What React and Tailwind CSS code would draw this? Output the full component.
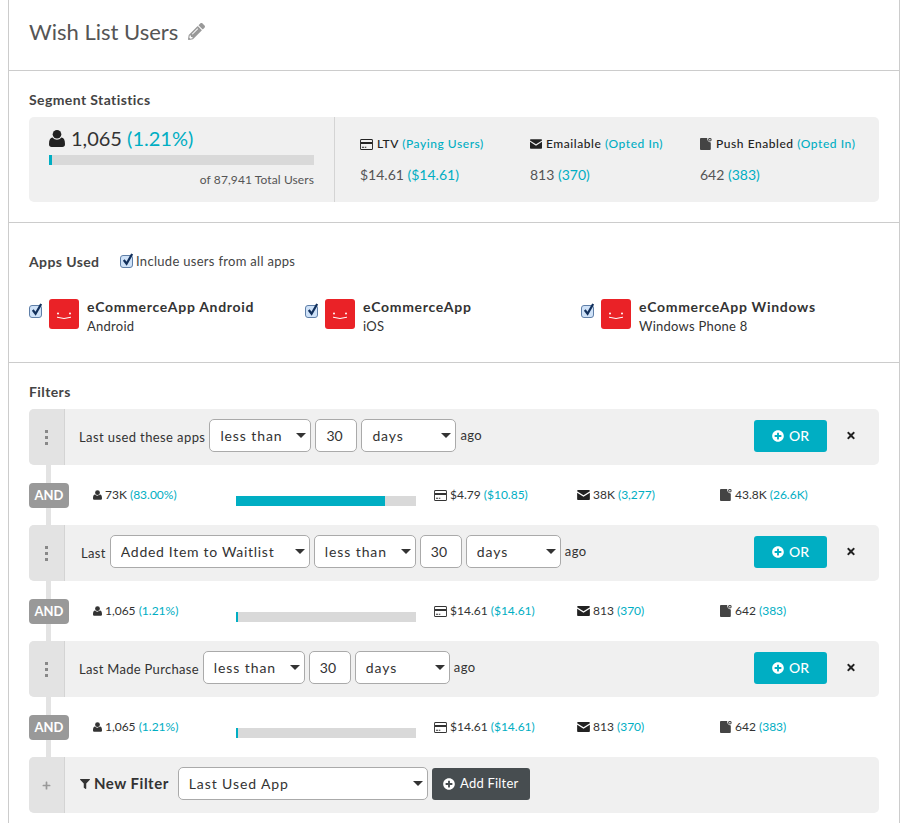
import React from 'react';
import { FaPencilAlt, FaPlusCircle, FaTimes, FaFilter, FaPlus } from 'react-icons/fa';

const UserIcon = ({ className }) => (
  <svg viewBox="0 0 16 17" className={className} fill="currentColor">
    <circle cx="8" cy="4.300" r="4.300" />
    <path d="M3.600 7.600C5 9.200 6.400 9.700 8 9.700s3-.5 4.400-2.100C14.800 7.900 16 10 16 14.200c0 1.800-1 2.800-2.700 2.800H2.700C1 17 0 16 0 14.200 0 10 1.200 7.900 3.600 7.600z" />
  </svg>
);

const CardIcon = ({ className }) => (
  <svg viewBox="0 0 14 12" className={className} fill="currentColor">
    <path d="M1.500 0h11A1.500 1.500 0 0 1 14 1.500v9a1.500 1.500 0 0 1-1.500 1.500h-11A1.500 1.500 0 0 1 0 10.500v-9A1.500 1.500 0 0 1 1.500 0zM1 3.200h12V1.500a.5.5 0 0 0-.5-.5h-11a.5.5 0 0 0-.5.500zM1 5.500v5a.5.5 0 0 0 .5.5h11a.5.5 0 0 0 .5-.5v-5zM2 8.500h2.500v1H2zm3.300 0h1.500v1H5.300z" fillRule="evenodd" />
  </svg>
);

const MailIcon = ({ className }) => (
  <svg viewBox="0 0 14 11" className={className} fill="#222">
    <path d="M1.200 0h11.600C13.500 0 14 .5 14 1.200v.3L7 5.800 0 1.500v-.3C0 .5.500 0 1.200 0z" />
    <path d="M0 3l7 4.400L14 3v6.800c0 .7-.5 1.200-1.200 1.200H1.200C.5 11 0 10.500 0 9.800z" />
  </svg>
);

const PushIcon = ({ className }) => (
  <svg viewBox="0 0 13 13" className={className}>
    <path d="M1 0h6.800c-.3 2.600 1.300 4.600 3.900 4.800V12a1 1 0 0 1-1 1H1a1 1 0 0 1-1-1V1a1 1 0 0 1 1-1z" fill="#444" />
    <circle cx="10.700" cy="1.900" r="1.400" fill="none" stroke="#444" strokeWidth="1.100" />
  </svg>
);

const Check = ({ className = '' }) => (
  <span className={`relative inline-block w-[13px] h-[13px] shrink-0 rounded-[3px] border border-[#5f7fa8] bg-[#cfe2f8] ${className}`}>
    <svg viewBox="0 0 14 16" className="absolute left-[0px] top-[-4px] w-[13px] h-[15px]">
      <path d="M3 8.500l3 4L12 2" fill="none" stroke="#12305c" strokeWidth="2.400" />
    </svg>
  </span>
);

const AppLogo = () => (
  <div className="w-[30px] h-[30px] shrink-0 rounded-[3px] bg-[#ea2227]">
    <svg viewBox="0 0 30 30" className="w-[30px] h-[30px]">
      <circle cx="9" cy="14.500" r="1" fill="#fff" />
      <circle cx="21" cy="14.500" r="1" fill="#fff" />
      <path d="M8 18.200q7 2.600 14 0" fill="none" stroke="#fff" strokeWidth="1" />
    </svg>
  </div>
);

const Select = ({ value, className, tracking = 'tracking-[0.9px]' }) => (
  <div className={`relative h-[33px] shrink-0 ${className}`}>
    <select
      defaultValue={value}
      className={`w-full h-full appearance-none bg-white border border-[#aaa] rounded-[5px] pl-[10px] text-[14px] text-[#333] ${tracking}`}
    >
      <option>{value}</option>
    </select>
    <svg viewBox="0 0 10 5" className="absolute right-[5px] top-[14px] w-[10px] h-[5px] pointer-events-none">
      <path d="M0 0h10L5 5z" fill="#333" />
    </svg>
  </div>
);

const NumberBox = () => (
  <input
    defaultValue="30"
    className="w-[42px] h-[33px] shrink-0 bg-white border border-[#aaa] rounded-[5px] pl-[10px] text-[14px] text-[#333]"
  />
);

const FilterRow = ({ children }) => (
  <div className="flex h-[56px] rounded-[5px] bg-[#f0f0f0] overflow-hidden">
    <div className="w-[36px] shrink-0 flex flex-col items-center justify-center gap-[3px] bg-[#e3e3e3] border-r border-[#d4d4d4]">
      <span className="w-[3px] h-[3px] bg-[#888]" />
      <span className="w-[3px] h-[3px] bg-[#888]" />
      <span className="w-[3px] h-[3px] bg-[#888]" />
    </div>
    <div className="flex-1 flex items-center gap-[4px] pb-[3px] text-[13px] text-[#333]">
      {children}
      <button className="ml-auto w-[73px] h-[32px] flex items-center justify-center gap-[5px] rounded-[3px] bg-[#00aec3] text-white text-[14px] font-medium">
        <FaPlusCircle className="w-[12px] h-[12px]" />
        OR
      </button>
      <FaTimes className="ml-[15px] mr-[23px] w-[10px] h-[11px] text-[#222]" />
    </div>
  </div>
);

const Teal = ({ children }) => <span className="text-[#00aec3]">{children}</span>;

const StatRow = ({ users, pct, fill, ltv, ltvPaid, mail, mailOpt, push, pushOpt }) => (
  <div className="relative flex items-center h-[60px] text-[12px] text-[#333]">
    <div className="absolute left-[17px] top-0 w-[5px] h-full bg-[#e3e3e3]" />
    <div className="relative w-[40px] h-[25px] pt-[1px] flex items-center justify-center rounded-[4px] bg-[#999] text-white text-[13px] font-bold">
      AND
    </div>
    <div className="w-[167px] pl-[24px] shrink-0 flex items-center gap-[3px]">
      <UserIcon className="w-[9px] h-[10px]" />
      <span>{users} <Teal>{pct}</Teal></span>
    </div>
    <div className="w-[180px] h-[10px] mt-[12px] shrink-0 bg-[#d9d9d9]">
      <div className={`h-full bg-[#00aec3] ${fill}`} />
    </div>
    <div className="w-[143px] ml-[18px] shrink-0 flex items-center gap-[3px]">
      <CardIcon className="w-[13px] h-[11px]" />
      <span>{ltv} <Teal>{ltvPaid}</Teal></span>
    </div>
    <div className="w-[143px] shrink-0 flex items-center gap-[3px]">
      <MailIcon className="w-[13px] h-[10px]" />
      <span>{mail} <Teal>{mailOpt}</Teal></span>
    </div>
    <div className="flex items-center gap-[3px]">
      <PushIcon className="w-[12px] h-[12px]" />
      <span>{push} <Teal>{pushOpt}</Teal></span>
    </div>
  </div>
);

const Metric = ({ icon, label, note, value, paid }) => (
  <div className="w-[170px] shrink-0">
    <div className="flex items-center gap-[4px] text-[12px] font-medium tracking-[0.55px] text-[#222] leading-[18px]">
      {icon}
      <span>{label} <Teal>{note}</Teal></span>
    </div>
    <div className="mt-[11px] text-[14px] text-[#555]">
      {value} <Teal>{paid}</Teal>
    </div>
  </div>
);

const AppItem = ({ name, platform }) => (
  <div className="w-[276px] flex items-start">
    <Check className="mt-[6px]" />
    <div className="ml-[7px]"><AppLogo /></div>
    <div className="ml-[8px] -mt-[1px]">
      <div className="text-[14px] font-bold tracking-[0.7px] text-[#333] leading-[18px]">{name}</div>
      <div className="text-[13px] tracking-[0.25px] text-[#333] leading-[20px]">{platform}</div>
    </div>
  </div>
);

export default function App() {
  return (
    <div className="h-[823px] overflow-hidden ml-[8px] mr-[9px] border-x border-[#ccc] bg-white font-['Lato',sans-serif]">
      {/* Title */}
      <div className="h-[71px] px-[20px] pb-[8px] flex items-center gap-[10px] border-b border-[#ccc]">
        <h1 className="text-[22px] text-[#555] font-normal">Wish List Users</h1>
        <FaPencilAlt className="w-[17px] h-[17px] text-[#999]" />
      </div>

      {/* Segment Statistics */}
      <div className="h-[152px] px-[20px] pt-[19px] border-b border-[#ccc]">
        <h2 className="text-[14px] font-bold tracking-[0.4px] text-[#444] leading-[20px]">Segment Statistics</h2>
        <div className="mt-[7px] h-[85px] flex rounded-[5px] bg-[#f0f0f0]">
          <div className="w-[306px] shrink-0 px-[20px] border-r border-[#d4d4d4]">
            <div className="flex items-center gap-[6px] h-[38px] pt-[4px] text-[20px] text-[#333]">
              <UserIcon className="w-[16px] h-[17px] text-[#222]" />
              <span>1,065 <Teal>(1.21%)</Teal></span>
            </div>
            <div className="h-[10px] bg-[#d9d9d9]">
              <div className="h-full w-[3px] bg-[#00aec3]" />
            </div>
            <div className="mt-[6px] text-right text-[12px] tracking-[0.1px] text-[#555]">of 87,941 Total Users</div>
          </div>
          <div className="flex pl-[25px] pt-[18px]">
            <Metric icon={<CardIcon className="w-[13px] h-[11px]" />} label="LTV" note="(Paying Users)" value="$14.61" paid="($14.61)" />
            <Metric icon={<MailIcon className="w-[12px] h-[10px]" />} label="Emailable" note="(Opted In)" value="813" paid="(370)" />
            <Metric icon={<PushIcon className="w-[12px] h-[12px]" />} label="Push Enabled" note="(Opted In)" value="642" paid="(383)" />
          </div>
        </div>
      </div>

      {/* Apps Used */}
      <div className="h-[140px] px-[20px] pt-[28px] border-b border-[#ccc]">
        <div className="flex items-center h-[20px]">
          <h2 className="w-[91px] text-[14px] font-bold tracking-[0.4px] text-[#444]">Apps Used</h2>
          <Check />
          <span className="ml-[3px] pt-[1px] text-[13px] tracking-[0.3px] text-[#444]">Include users from all apps</span>
        </div>
        <div className="mt-[28px] flex">
          <AppItem name="eCommerceApp Android" platform="Android" />
          <AppItem name="eCommerceApp" platform="iOS" />
          <AppItem name="eCommerceApp Windows" platform="Windows Phone 8" />
        </div>
      </div>

      {/* Filters */}
      <div className="px-[20px] pt-[19px]">
        <h2 className="text-[14px] font-bold tracking-[0.4px] text-[#444] leading-[20px] mb-[7px]">Filters</h2>

        <FilterRow>
          <span className="ml-[14px] pt-[4px] tracking-[0.4px]">Last used these apps</span>
          <Select value="less than" className="w-[102px]" />
          <NumberBox />
          <Select value="days" className="w-[95px]" />
          <span className="tracking-[0.35px]">ago</span>
        </FilterRow>
        <StatRow users="73K" pct="(83.00%)" fill="w-[83%]" ltv="$4.79" ltvPaid="($10.85)" mail="38K" mailOpt="(3,277)" push="43.8K" pushOpt="(26.6K)" />

        <FilterRow>
          <span className="ml-[16px] pt-[4px] tracking-[0.35px]">Last</span>
          <Select value="Added Item to Waitlist" className="w-[200px]" tracking="tracking-[0.7px]" />
          <Select value="less than" className="w-[102px]" />
          <NumberBox />
          <Select value="days" className="w-[95px]" />
          <span className="tracking-[0.35px]">ago</span>
        </FilterRow>
        <StatRow users="1,065" pct="(1.21%)" fill="w-[2px]" ltv="$14.61" ltvPaid="($14.61)" mail="813" mailOpt="(370)" push="642" pushOpt="(383)" />

        <FilterRow>
          <span className="ml-[14px] pt-[4px] tracking-[0.3px]">Last Made Purchase</span>
          <Select value="less than" className="w-[102px]" />
          <NumberBox />
          <Select value="days" className="w-[95px]" />
          <span className="tracking-[0.35px]">ago</span>
        </FilterRow>
        <StatRow users="1,065" pct="(1.21%)" fill="w-[2px]" ltv="$14.61" ltvPaid="($14.61)" mail="813" mailOpt="(370)" push="642" pushOpt="(383)" />

        {/* New filter */}
        <div className="flex h-[56px] rounded-[5px] bg-[#f0f0f0] overflow-hidden">
          <div className="w-[36px] shrink-0 flex items-center justify-center bg-[#e3e3e3] border-r border-[#d4d4d4]">
            <FaPlus className="w-[9px] h-[9px] text-[#999]" />
          </div>
          <div className="flex-1 flex items-center pb-[3px]">
            <FaFilter className="ml-[15px] w-[10px] h-[10px] text-[#333]" />
            <span className="ml-[4px] text-[15px] font-bold tracking-[0.5px] text-[#333]">New Filter</span>
            <Select value="Last Used App" className="ml-[9px] w-[250px]" />
            <button className="ml-[4px] w-[98px] h-[32px] flex items-center justify-center gap-[5px] rounded-[3px] bg-[#474d50] text-white text-[13px] tracking-[0.2px]">
              <FaPlusCircle className="w-[12px] h-[12px]" />
              Add Filter
            </button>
          </div>
        </div>
      </div>
    </div>
  );
}
